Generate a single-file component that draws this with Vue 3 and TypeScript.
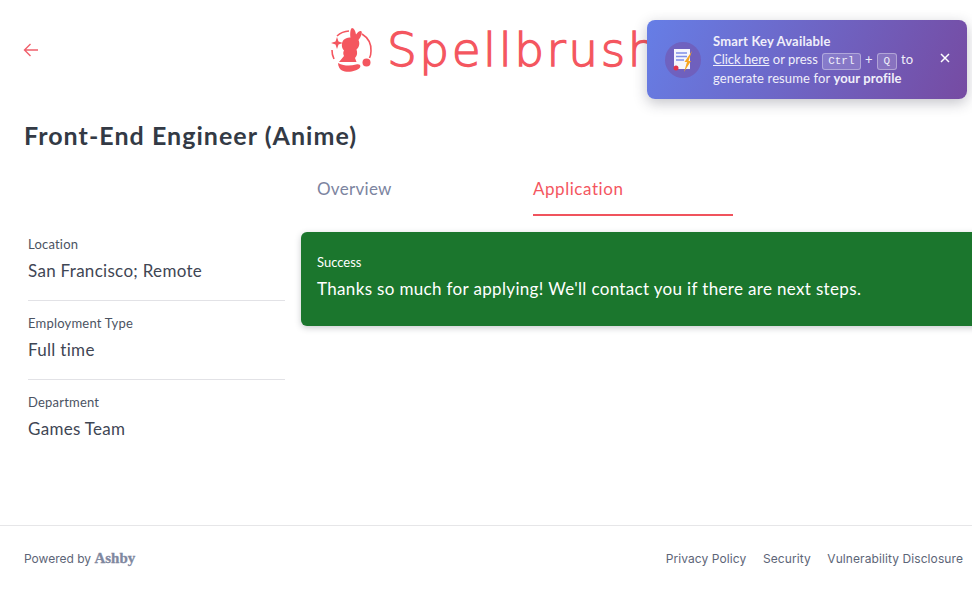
<script setup lang="ts">
const facts: { label: string; value: string }[] = [
  { label: 'Location', value: 'San Francisco; Remote' },
  { label: 'Employment Type', value: 'Full time' },
  { label: 'Department', value: 'Games Team' },
]
</script>

<template>
  <div class="page">
    <header class="top">
      <a class="back" aria-label="Back">
        <svg width="16" height="16" viewBox="0 0 16 16" fill="none" stroke="#f0606c" stroke-width="1.4">
          <path d="M15 8H1.500M7.500 2 1.500 8l6 6" />
        </svg>
      </a>
      <div class="logo">
        <svg class="mark" width="42" height="44" viewBox="0 0 42 44">
          <path d="M3 31a19 19 0 0 1-2-9" fill="none" stroke="#f4565f" stroke-width="1.600" />
          <path d="M6 8a19 19 0 0 1 12-5" fill="none" stroke="#f4565f" stroke-width="1.600" />
          <path d="M31 6a19 19 0 0 1 9 17c0 3-.5 5-1.500 7" fill="none" stroke="#f4565f" stroke-width="1.600" />
          <path d="M6 9l1.500 4.500L12 15l-4.500 1.500L6 21l-1.500-4.500L0 15l4.500-1.500z" fill="#f4565f" />
          <path d="M21 0c2 0 3.500 3 4 6.500 1.500-2 3.500-4 5-3.500 2 1 0 6-2.500 9 1.500 3 1 7-2 9.500 1 3 1 6-1.500 8.500l1.500 4H8l5-6c-1-2-1-4 0-5.500-3-3-2.500-8-.5-10.500 2-2 4.500-2.800 7-2.500C19 7 19 1 21 0z" fill="#f4565f" />
          <path d="M7 35c6 3 12 3.200 18 1.500 4-1 5 1 4 3-3 4-13 5.500-18 3-2-1-4-4-4-7.500z" fill="#f4565f" />
          <circle cx="35.500" cy="34.500" r="4" fill="#f4565f" />
        </svg>
        <span class="wordmark">Spellbrush</span>
      </div>
    </header>

    <h1 class="title">Front-End Engineer (Anime)</h1>

    <div class="columns">
      <aside class="side">
        <div v-for="fact in facts" :key="fact.label" class="fact">
          <div class="fact-label">{{ fact.label }}</div>
          <div class="fact-value">{{ fact.value }}</div>
        </div>
      </aside>
      <main class="content">
        <nav class="tabs">
          <a class="tab">Overview</a>
          <a class="tab active">Application</a>
        </nav>
        <section class="alert">
          <div class="alert-title">Success</div>
          <div class="alert-text">Thanks so much for applying! We'll contact you if there are next steps.</div>
        </section>
      </main>
    </div>

    <footer class="foot">
      <div class="powered">Powered by <span class="ashby">Ashby</span></div>
      <div class="links">
        <a>Privacy Policy</a>
        <a>Security</a>
        <a>Vulnerability Disclosure</a>
      </div>
    </footer>

    <aside class="toast">
      <div class="toast-icon">
        <svg width="24" height="30" viewBox="0 0 24 30">
          <rect x="3" y="4" width="16" height="20" fill="#f5f6fd" />
          <path d="M5 8h11M5 11.500h11M5 15h8" stroke="#7f8fe6" stroke-width="1.500" />
          <circle cx="5" cy="23" r="2.500" fill="#e3324a" />
          <path d="M21 6l-3.500 10H20l-7 11 3-10h-2.500z" fill="#f5a623" />
        </svg>
      </div>
      <div class="toast-body">
        <div class="toast-title">Smart Key Available</div>
        <div class="toast-line keys"><u>Click here</u> or press <kbd>Ctrl</kbd> + <kbd class="single">Q</kbd> to</div>
        <div class="toast-line">generate resume for <b>your profile</b></div>
      </div>
      <svg class="toast-close" width="10" height="10" viewBox="0 0 10 10" stroke="#fff" stroke-width="1.500">
        <path d="M1 1l8 8M9 1 1 9" />
      </svg>
    </aside>
  </div>
</template>

<style scoped>
.page {
  position: relative;
  width: 972px;
  height: 592px;
  overflow: hidden;
  background: #fff;
  font-family: Lato, "Liberation Sans", sans-serif;
  color: #3a4150;
}
.top {
  height: 100px;
  display: flex;
  align-items: center;
  justify-content: center;
  position: relative;
}
.back {
  position: absolute;
  left: 23px;
  top: 42px;
  line-height: 0;
}
.logo {
  display: flex;
  align-items: center;
  gap: 14px;
  margin-left: 20px;
  width: 330px;
  flex: none;
  white-space: nowrap;
}
.mark {
  flex: none;
}
.wordmark {
  font-family: "DejaVu Sans", sans-serif;
  font-weight: 200;
  font-size: 47px;
  line-height: 60px;
  color: #f4565f;
  letter-spacing: 2.500px;
  -webkit-text-stroke: 1.300px #f4565f;
}
.title {
  margin: 19px 0 0 24px;
  font-size: 25px;
  line-height: 32px;
  font-weight: 700;
  color: #333a45;
  letter-spacing: 1.040px;
}
.columns {
  display: flex;
  margin-top: 19px;
  padding-left: 28px;
}
.side {
  width: 257px;
  flex: none;
  padding-top: 65px;
}
.fact {
  padding: 13px 0 17px;
  border-bottom: 1px solid #e2e2e6;
}
.fact:first-child {
  padding-top: 0;
}
.fact:last-child {
  border-bottom: 0;
}
.fact-label {
  font-size: 13px;
  line-height: 18px;
  color: #4b5362;
  letter-spacing: 0.2px;
}
.fact-value {
  font-size: 17px;
  line-height: 24px;
  margin-top: 6px;
  color: #3f4654;
  letter-spacing: 0.3px;
}
.content {
  margin-left: 16px;
  width: 720px;
  flex: none;
}
.tabs {
  display: flex;
  gap: 16px;
  padding-left: 16px;
  height: 46px;
}
.tab {
  width: 200px;
  font-size: 17px;
  line-height: 24px;
  padding-top: 7px;
  height: 46px;
  box-sizing: border-box;
  color: #7c84a0;
  letter-spacing: 0.3px;
}
.tab.active {
  color: #f4565f;
  border-bottom: 2px solid #f0535d;
  letter-spacing: 0.55px;
}
.alert {
  margin-top: 16px;
  height: 94px;
  box-sizing: border-box;
  padding: 21px 16px 0;
  background: #1b762d;
  border-radius: 6px;
  color: #fff;
  box-shadow: 0 2px 6px rgba(40, 50, 60, 0.25);
}
.alert-title {
  font-size: 13px;
  line-height: 18px;
}
.alert-text {
  font-size: 17px;
  line-height: 24px;
  margin-top: 6px;
  letter-spacing: 0.34px;
}
.foot {
  position: absolute;
  left: 0;
  right: 0;
  top: 525px;
  height: 67px;
  border-top: 1px solid #e6e6e8;
  display: flex;
  justify-content: space-between;
  padding: 23px 9px 0 24px;
  box-sizing: border-box;
  font-family: Inter, sans-serif;
  font-size: 12px;
  line-height: 20px;
  color: #5d6577;
}
.powered {
  margin-top: -1px;
}
.ashby {
  font-family: "Liberation Serif", serif;
  font-weight: 700;
  font-size: 15px;
  color: #7f88a0;
  -webkit-text-stroke: 0.3px #7f88a0;
}
.links {
  display: flex;
  gap: 16.500px;
  letter-spacing: 0.09px;
}
.toast {
  position: absolute;
  left: 647px;
  top: 20px;
  width: 320px;
  height: 79px;
  box-sizing: border-box;
  border-radius: 8px;
  background: linear-gradient(115deg, #667ee6 0%, #764ba2 100%);
  box-shadow: 0 4px 14px rgba(40, 40, 60, 0.28);
  display: flex;
  align-items: center;
  padding-left: 18px;
  color: #fff;
  font-size: 13px;
}
.toast-icon {
  width: 36px;
  height: 36px;
  border-radius: 50%;
  background: rgba(118, 75, 162, 0.5);
  display: flex;
  align-items: center;
  justify-content: center;
  flex: none;
}
.toast-body {
  margin-left: 12px;
  width: 212px;
  flex: none;
  color: #f0effa;
  letter-spacing: 0.12px;
}
.toast-title,
.toast-line {
  height: 19px;
  line-height: 19px;
}
.toast-title {
  font-weight: 700;
  line-height: 21px;
  letter-spacing: 0.18px;
}
.toast-line.keys {
  letter-spacing: 0;
}
.toast-line b {
  font-weight: 700;
}
kbd {
  display: inline-block;
  box-sizing: border-box;
  height: 17px;
  font-family: "Liberation Mono", monospace;
  font-size: 11px;
  font-weight: 400;
  line-height: 15px;
  padding: 0 5px;
  margin: 0 1px;
  border-radius: 3px;
  letter-spacing: 0;
  text-align: center;
  background: rgba(255, 255, 255, 0.16);
  border: 1px solid rgba(255, 255, 255, 0.35);
  vertical-align: 0;
}
kbd.single {
  min-width: 20px;
}
.toast-close {
  margin: -3px 0 0 15px;
  flex: none;
}
</style>

<style>
html, body { margin: 0; overflow: hidden; }
</style>
